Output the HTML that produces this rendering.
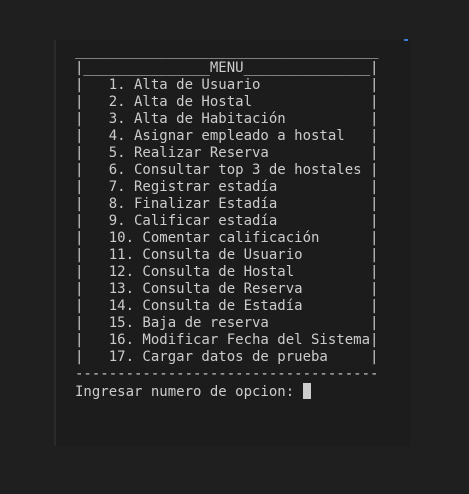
<!DOCTYPE html>
<html><head><meta charset="utf-8"><style>
html,body{margin:0;padding:0;background:#1f1f1f;width:469px;height:494px;overflow:hidden}
.panel{position:absolute;left:54px;top:40px;width:356px;height:406px;background:#1c1c1c;border-left:2px solid #2a2a2a;box-sizing:border-box}
pre{position:absolute;left:75px;top:43px;margin:0;font-family:"DejaVu Sans Mono","Liberation Mono",monospace;font-size:14px;line-height:17px;color:#cccccc;white-space:pre}
.cur{display:inline-block;width:8px;height:16px;background:#cccccc;vertical-align:-3px}
.blue{position:absolute;left:404px;top:39px;width:4px;height:2px;background:#3a7bd5}
</style></head><body>
<div class="panel"></div><div class="blue"></div>
<pre>____________________________________
|_______________MENU_______________|
|   1. Alta de Usuario             |
|   2. Alta de Hostal              |
|   3. Alta de Habitación          |
|   4. Asignar empleado a hostal   |
|   5. Realizar Reserva            |
|   6. Consultar top 3 de hostales |
|   7. Registrar estadía           |
|   8. Finalizar Estadía           |
|   9. Calificar estadía           |
|   10. Comentar calificación      |
|   11. Consulta de Usuario        |
|   12. Consulta de Hostal         |
|   13. Consulta de Reserva        |
|   14. Consulta de Estadía        |
|   15. Baja de reserva            |
|   16. Modificar Fecha del Sistema|
|   17. Cargar datos de prueba     |
------------------------------------
Ingresar numero de opcion: <span class="cur"></span></pre>
</body></html>
